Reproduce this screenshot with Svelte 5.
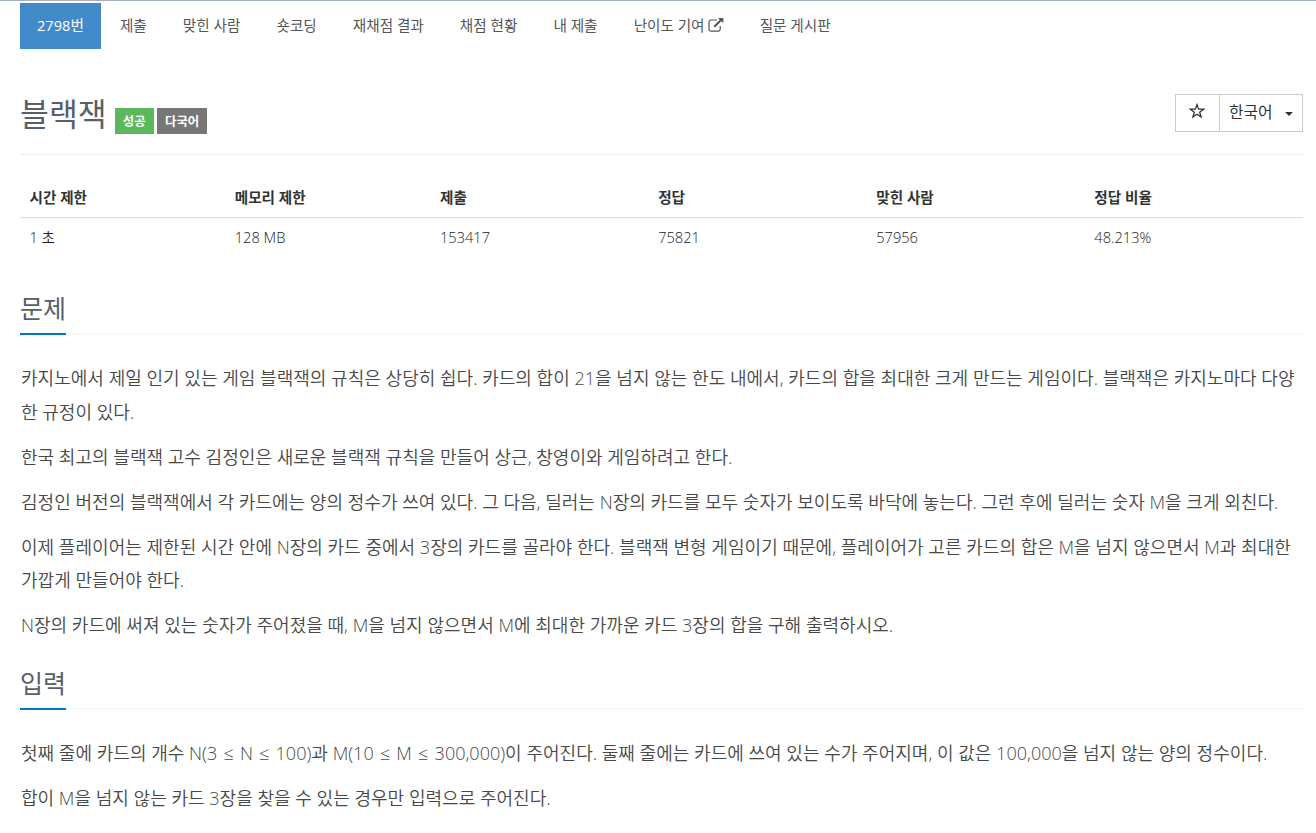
<script>
  let tabs = ["2798번", "제출", "맞힌 사람", "숏코딩", "재채점 결과", "채점 현황", "내 제출", "난이도 기여", "질문 게시판"];

  let info = [
    ["시간 제한", "1 초"],
    ["메모리 제한", "128 MB"],
    ["제출", "153417"],
    ["정답", "75821"],
    ["맞힌 사람", "57956"],
    ["정답 비율", "48.213%"]
  ];

  let sections = [
    {
      title: "문제",
      text: [
        "카지노에서 제일 인기 있는 게임 블랙잭의 규칙은 상당히 쉽다. 카드의 합이 21을 넘지 않는 한도 내에서, 카드의 합을 최대한 크게 만드는 게임이다. 블랙잭은 카지노마다 다양한 규정이 있다.",
        "한국 최고의 블랙잭 고수 김정인은 새로운 블랙잭 규칙을 만들어 상근, 창영이와 게임하려고 한다.",
        "김정인 버전의 블랙잭에서 각 카드에는 양의 정수가 쓰여 있다. 그 다음, 딜러는 N장의 카드를 모두 숫자가 보이도록 바닥에 놓는다. 그런 후에 딜러는 숫자 M을 크게 외친다.",
        "이제 플레이어는 제한된 시간 안에 N장의 카드 중에서 3장의 카드를 골라야 한다. 블랙잭 변형 게임이기 때문에, 플레이어가 고른 카드의 합은 M을 넘지 않으면서 M과 최대한 가깝게 만들어야 한다.",
        "N장의 카드에 써져 있는 숫자가 주어졌을 때, M을 넘지 않으면서 M에 최대한 가까운 카드 3장의 합을 구해 출력하시오."
      ]
    },
    {
      title: "입력",
      text: [
        "첫째 줄에 카드의 개수 N(3 ≤ N ≤ 100)과 M(10 ≤ M ≤ 300,000)이 주어진다. 둘째 줄에는 카드에 쓰여 있는 수가 주어지며, 이 값은 100,000을 넘지 않는 양의 정수이다.",
        "합이 M을 넘지 않는 카드 3장을 찾을 수 있는 경우만 입력으로 주어진다."
      ]
    }
  ];
</script>

<style>
  :global(body) {
    background: #fff;
    overflow: hidden;
  }

  .page {
    height: 833px;
    overflow: hidden;
    box-sizing: border-box;
    border-top: 1px solid #a3aec8;
    padding: 2px 13px 0 20px;
    font-family: "Open Sans", "Noto Sans CJK KR", sans-serif;
    font-size: 14.6px;
    color: #333;
  }

  .tabs {
    display: flex;
    gap: 2.1px;
    height: 46px;
  }

  .tab {
    padding: 0 17px;
    line-height: 44px;
    color: #555;
    white-space: nowrap;
  }

  .tab.active {
    background: #428bca;
    color: #fff;
  }

  .tab svg {
    width: 16px;
    height: 14px;
    margin-left: 3px;
    vertical-align: -1px;
  }

  .header {
    display: flex;
    height: 105px;
    border-bottom: 1px solid #eee;
  }

  h1 {
    margin: 39px 8px 0 0;
    font-size: 31.4px;
    line-height: 51px;
    font-weight: 400;
    color: #585f69;
  }

  .badge {
    height: 26px;
    margin: 59px 3px 0 0;
    padding: 0 8.2px;
    line-height: 28px;
    font-size: 12.4px;
    font-weight: 700;
    color: #fff;
    background: #777;
  }

  .badge.success {
    background: #5cb85c;
  }

  .buttons {
    display: flex;
    height: 36px;
    margin: 45px 0 0 auto;
    border: 1px solid #ccc;
    font-size: 15.8px;
    line-height: 35px;
  }

  .star {
    width: 43px;
    border-right: 1px solid #ccc;
    text-align: center;
  }

  .star svg {
    width: 16px;
    height: 16px;
    margin-right: 1px;
    vertical-align: -1px;
  }

  .lang {
    display: flex;
    width: 64px;
    padding: 0 9px;
    justify-content: space-between;
  }

  .caret {
    margin-top: 17px;
    width: 0;
    height: 0;
    border: 4.4px solid transparent;
    border-top-color: #333;
    border-bottom: 0;
  }

  table {
    width: 100%;
    margin-top: 22px;
    border-collapse: collapse;
    table-layout: fixed;
  }

  th,
  td {
    width: 17%;
    height: 40px;
    padding: 0 9.5px;
    text-align: left;
    line-height: 20px;
    font-weight: 350;
    color: #222;
    box-sizing: border-box;
  }

  th {
    font-weight: 700;
    color: #333;
    border-bottom: 1px solid #ddd;
  }

  th:nth-child(-n + 2) {
    width: 16%;
  }

  .headline {
    height: 46px;
    margin: 30px 0 28px;
    border-bottom: 1px dotted #e4e9f0;
  }

  p + .headline {
    margin-top: 19px;
  }

  .headline h2 {
    display: inline-block;
    margin: 0;
    height: 46px;
    font-size: 25px;
    line-height: 42px;
    font-weight: 400;
    color: #585f69;
    border-bottom: 2px solid #0076bd;
  }

  p {
    margin: 0 0 11.6px;
    padding-left: 1px;
    font-size: 18.04px;
    line-height: 33.5px;
    font-weight: 350;
    color: #484848;
    word-break: break-all;
  }

  .le {
    margin: 0 1.5px;
  }
</style>

<div class="page">
  <div class="tabs">
    {#each tabs as tab, i}
      <div class="tab" class:active={i == 0}>
        {tab}{#if tab == "난이도 기여"}<svg viewBox="0 0 16 14" fill="none" stroke="#555" stroke-width="1.2">
            <path d="M9 2H3.2Q1 2 1 4.2V11Q1 13.2 3.2 13.2H10Q12.2 13.2 12.2 11V8" />
            <path d="M6.3 8.7L13 2" stroke-width="2" />
            <path d="M10 0H15.3V5.3Z" fill="#555" stroke="none" />
          </svg>{/if}
      </div>
    {/each}
  </div>

  <div class="header">
    <h1>블랙잭</h1>
    <span class="badge success">성공</span>
    <span class="badge">다국어</span>
    <div class="buttons">
      <div class="star">
        <svg viewBox="0 0 16 16" fill="none" stroke="#333" stroke-width="1.3">
          <path d="M8 1.6L9.6 6.1L14.6 6.2L10.7 9.2L12.1 14L8 11.2L3.9 14L5.3 9.2L1.4 6.2L6.4 6.1Z" />
        </svg>
      </div>
      <div class="lang">한국어 <span class="caret"></span></div>
    </div>
  </div>

  <table>
    <thead>
      <tr>
        {#each info as [name]}
          <th>{name}</th>
        {/each}
      </tr>
    </thead>
    <tbody>
      <tr>
        {#each info as [, value]}
          <td>{value}</td>
        {/each}
      </tr>
    </tbody>
  </table>

  {#each sections as section}
    <div class="headline"><h2>{section.title}</h2></div>
    {#each section.text as text}
      <p>
        {#each text.split("≤") as part, i}{#if i > 0}<span class="le">≤</span>{/if}{part}{/each}
      </p>
    {/each}
  {/each}
</div>
